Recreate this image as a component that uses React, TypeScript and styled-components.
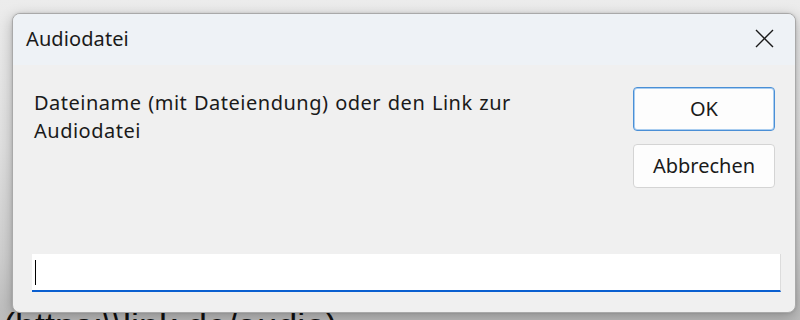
import React from 'react';
import styled, { createGlobalStyle } from 'styled-components';

const GlobalStyle = createGlobalStyle`
  html, body {
    margin: 0;
    padding: 0;
  }
  body {
    font-family: 'Noto Sans', 'Open Sans', sans-serif;
    background: #e4e4e4;
  }
`;

const Desktop = styled.div`
  position: relative;
  width: 800px;
  height: 320px;
  overflow: hidden;
  background: linear-gradient(180deg, #ececec 0%, #e0e0e0 45%, #cfcfcf 80%, #bcbcbc 100%);
`;

const BehindText = styled.div`
  padding: 307px 0 0 3px;
  font-family: 'Liberation Sans', sans-serif;
  font-size: 36px;
  line-height: 40px;
  color: #111;
  white-space: nowrap;
`;

const Dialog = styled.div`
  position: absolute;
  left: 12px;
  top: 13px;
  width: 782px;
  height: 298px;
  display: flex;
  flex-direction: column;
  background: #f0f0f0;
  border: 1px solid #a9a9a9;
  border-radius: 8px;
  overflow: hidden;
  box-shadow: 0 4px 14px rgba(0, 0, 0, 0.25), 0 0 3px rgba(0, 0, 0, 0.12);
`;

const TitleBar = styled.div`
  height: 51px;
  flex: none;
  display: flex;
  align-items: center;
  justify-content: space-between;
  padding-left: 13px;
  background: #eef2f6;
`;

const Title = styled.span`
  font-size: 20px;
  letter-spacing: 0.1px;
  color: #1a1a1a;
  margin-top: -2px;
`;

const CloseButton = styled.button`
  width: 60px;
  height: 51px;
  display: flex;
  align-items: center;
  justify-content: center;
  background: transparent;
  border: none;
  padding: 0 2px 2px 0;
  color: #1a1a1a;
`;

const Body = styled.div`
  flex: 1;
  display: flex;
  flex-direction: column;
  padding: 22px 14px 20px 19px;
`;

const TopRow = styled.div`
  display: flex;
  justify-content: space-between;
  align-items: flex-start;
`;

const Prompt = styled.p`
  margin: 2px 0 0 2px;
  width: 540px;
  font-size: 20px;
  letter-spacing: 0.5px;
  word-spacing: 1px;
  line-height: 28px;
  color: #1a1a1a;
`;

const ButtonColumn = styled.div`
  display: flex;
  flex-direction: column;
  gap: 13px;
  margin-right: 6px;
`;

const DialogButton = styled.button<{ $default?: boolean }>`
  width: 142px;
  height: 44px;
  font-family: 'Noto Sans', 'Open Sans', sans-serif;
  font-size: 20px;
  color: #1a1a1a;
  background: #fdfdfd;
  border: 1px solid ${(p) => (p.$default ? '#4a8fd6' : '#d4d4d4')};
  box-shadow: ${(p) => (p.$default ? 'inset 0 0 0 1px #a9cdf0' : 'none')};
  border-radius: 4px;
  padding: 0 0 2px 0;
`;

const InputField = styled.div`
  margin-top: auto;
  height: 36px;
  display: flex;
  align-items: center;
  padding-left: 3px;
  background: #ffffff;
  border-right: 1px solid #dcdcdc;
  border-bottom: 2px solid #0a5fd0;
`;

const Caret = styled.span`
  width: 1px;
  height: 25px;
  background: #000;
`;

export default function App() {
  return (
    <Desktop>
      <GlobalStyle />
      <BehindText>(https:\\link.de/audio)</BehindText>
      <Dialog>
        <TitleBar>
          <Title>Audiodatei</Title>
          <CloseButton aria-label="Schließen">
            <svg width="19" height="19" viewBox="0 0 19 19">
              <path d="M1 1 L18 18 M18 1 L1 18" stroke="currentColor" strokeWidth="1.4" fill="none" />
            </svg>
          </CloseButton>
        </TitleBar>
        <Body>
          <TopRow>
            <Prompt>Dateiname (mit Dateiendung) oder den Link zur Audiodatei</Prompt>
            <ButtonColumn>
              <DialogButton $default>OK</DialogButton>
              <DialogButton>Abbrechen</DialogButton>
            </ButtonColumn>
          </TopRow>
          <InputField>
            <Caret />
          </InputField>
        </Body>
      </Dialog>
    </Desktop>
  );
}
